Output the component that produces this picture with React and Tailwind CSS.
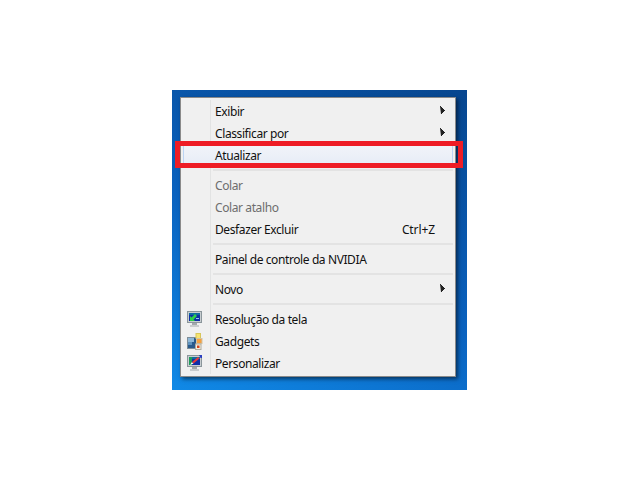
const font = { fontFamily: '"Noto Sans", sans-serif' };

function Arrow() {
  return (
    <svg width="5" height="9" viewBox="0 0 5 9" className="absolute right-[8px] top-[6px]">
      <path d="M0 0h1v1h1v1h1v1h1v1h1v1h-1v1h-1v1h-1v1h-1z" fill="#222" />
    </svg>
  );
}

function MonitorBase({ children }) {
  return (
    <svg width="16" height="16" viewBox="0 0 16 16">
      <rect x="0.500" y="0.500" width="14" height="11" fill="#c8ced1" stroke="#8b969b" />
      <rect x="2" y="2" width="11" height="8" fill="#0f2fa8" />
      <rect x="2" y="2" width="11" height="2" fill="#0f6aa0" />
      {children}
      <rect x="5" y="12" width="5" height="2" fill="#a3a9ac" />
      <rect x="3" y="14" width="9" height="2" fill="#c9cccd" />
    </svg>
  );
}

const IconRes = () => (
  <MonitorBase>
    <path d="M3 9V5l1.500 1.500L8 3l2 2-3.500 3.500L8 10H3z" fill="#2fd04a" />
    <rect x="9" y="7" width="3" height="1" fill="#8fd0e8" />
  </MonitorBase>
);

const IconGadgets = () => (
  <svg width="16" height="17" viewBox="0 0 16 17">
    <rect x="0.500" y="4.500" width="10" height="11" fill="#2a5a8c" stroke="#7f8e99" />
    <rect x="1" y="5" width="6" height="4" fill="#8fb8d8" />
    <rect x="1" y="9" width="4" height="3" fill="#5f92bd" />
    <rect x="9" y="0.500" width="4.500" height="5" fill="#f7e46e" stroke="#d8c65a" />
    <rect x="9.500" y="5.500" width="5.500" height="5" fill="#f5a03f" stroke="#d2c3a4" />
    <rect x="8.500" y="11" width="5.500" height="5.500" fill="#f4f0e0" stroke="#b0aca0" />
    <rect x="10" y="12.500" width="2.500" height="2.500" fill="#d8451c" />
  </svg>
);

const IconPers = () => (
  <MonitorBase>
    <rect x="2" y="2" width="3" height="8" fill="#1f9a5a" />
    <path d="M3 10l2-3 1.500 1.500z" fill="#fff" />
    <path d="M5 7l6-5 1.500 1.500L6.500 8.500z" fill="#e23a3a" />
    <path d="M12 0h3v3h-1.500z" fill="#2a3fc0" />
  </MonitorBase>
);

function Item({ label, disabled, arrow, shortcut, icon, hot }) {
  return (
    <div
      className={`relative flex h-[22px] items-center pr-[18px] pt-[1px] text-[12px] ${
        disabled ? "text-[#6d6d6d]" : "text-[#111]"
      } ${hot ? "border-x border-[#bcd4f4] bg-gradient-to-b from-[#f2f4f9] to-[#e6ecf6] pl-[31px]" : "pl-[32px]"}`}
    >
      {icon && <span className="absolute left-[4px] top-[3px] flex">{icon}</span>}
      <span className="flex-1 whitespace-nowrap tracking-[-0.4px]">{label}</span>
      {shortcut && <span className="whitespace-nowrap tracking-[-0.1px]">{shortcut}</span>}
      {arrow && <Arrow />}
    </div>
  );
}

function Sep() {
  return (
    <div className="flex h-[8px] items-center pl-[30px]">
      <div className="h-[2px] w-full bg-[#e3e3e3]" />
    </div>
  );
}

export default function App() {
  return (
    <div className="flex h-[480px] w-[640px] items-start bg-white pl-[172px] pt-[90px]" style={font}>
      <div className="relative h-[300px] w-[295px] bg-[linear-gradient(205deg,#07468f_0%,#0a62bf_55%,#1089e6_100%)] pl-[8px] pt-[7px]">
        <div className="relative h-[280px] w-[276px] border border-[#8a8a8a] bg-[#f0f0f0] p-[2px] shadow-[2px_2px_4px_rgba(0,0,0,0.55)]">
          <div className="absolute bottom-[2px] left-[29px] top-[2px] w-[1px] bg-[#e2e3e3]" />
          <div className="relative">
            <Item label="Exibir" arrow />
            <Item label="Classificar por" arrow />
            <Item label="Atualizar" hot />
            <Sep />
            <Item label="Colar" disabled />
            <Item label="Colar atalho" disabled />
            <Item label="Desfazer Excluir" shortcut="Ctrl+Z" />
            <Sep />
            <Item label="Painel de controle da NVIDIA" />
            <Sep />
            <Item label="Novo" arrow />
            <Sep />
            <Item label="Resolução da tela" icon={<IconRes />} />
            <Item label="Gadgets" icon={<IconGadgets />} />
            <Item label="Personalizar" icon={<IconPers />} />
          </div>
        </div>
        <div className="absolute left-[3px] top-[51px] h-[27px] w-[288px] border-[5px] border-[#ee1c25]" />
      </div>
    </div>
  );
}
